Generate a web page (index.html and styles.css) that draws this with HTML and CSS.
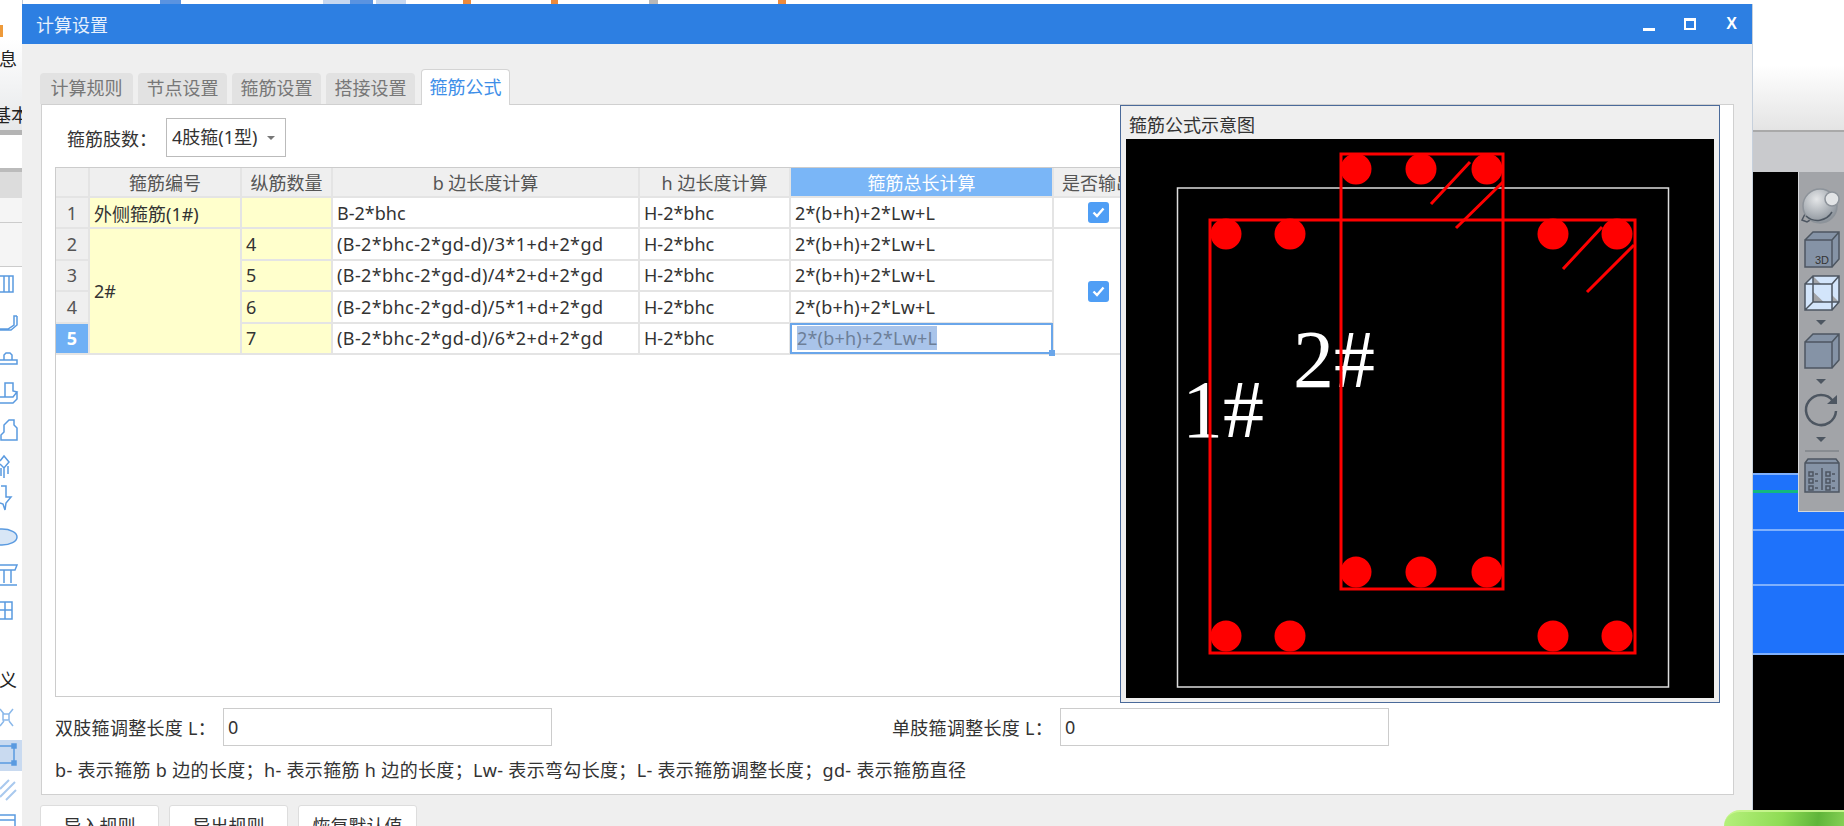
FILE: index.html
```html
<!DOCTYPE html>
<html lang="zh-CN">
<head>
    <meta charset="UTF-8">
    <title>计算设置</title>
    <link rel="stylesheet" href="styles.css">
</head>
<body>

<div class="desktop">
    <!-- Main program behind the dialog -->
    <div class="top-strip">
        <span class="top-chip chip-blue chip-a"></span>
        <span class="top-chip chip-light chip-b"></span>
        <span class="top-chip chip-blue chip-c"></span>
        <span class="top-chip chip-light chip-d"></span>
        <span class="top-chip chip-gray chip-e"></span>
        <span class="top-chip chip-orange chip-f"></span>
        <span class="top-chip chip-orange chip-g"></span>
        <span class="top-chip chip-orange chip-h"></span>
    </div>

    <div class="side-strip">
        <div class="side-ribbon">
            <span class="side-mark"></span>
            <span class="side-word word-info">息</span>
            <span class="side-word word-base">基本</span>
        </div>
        <div class="side-band"></div>
        <div class="side-head"></div>
        <div class="side-row"></div>
        <div class="side-row"></div>
        <span class="side-word word-def">义</span>
        <div class="side-selected"></div>
        <svg class="side-icons" width="22" height="560" viewBox="0 266 22 560" fill="none" stroke="#5a9ae0" stroke-width="1.5">
            <path d="M0 276h13v16H0M4 276v16M9 276v16" />
            <path d="M0 329h8l6-4v-9h3M17 316v9l-6 5H0" />
            <path d="M0 360h17v4H0M4 360v-5l2-2h4l2 2v5" />
            <path d="M0 397h13l4-5-4-1v-8H5v14M0 403h13l4-4v-7" />
            <path d="M4 440h13v-12l-3-3v-5l-5 0-5 5v7l-3 3v5z" />
            <path d="M0 461l4-5 5 6-5 6-4-4M1 468v8M4 468v10M8 466v8" />
            <path d="M1 486h5v11h5l-5 6-1 7-2-6-3-1" />
            <ellipse cx="2" cy="537" rx="15" ry="8" fill="#d8e6f6" />
            <path d="M0 565h17l-2 5H0M4 570v13M11 570v13M0 585h17" />
            <path d="M0 602h12v17H0M0 610h12M5 602v17" />
            <path d="M0 709l4 5M13 709l-4 5M0 726l4-5M13 726l-4-5M3 714h6v6H3z" stroke="#8ab8ea" />
            <path d="M0 746h14v17H0" stroke-width="1.5" />
            <path d="M12 744h4v4h-4zM12 761h4v4h-4z" fill="#5a9ae0" />
            <path d="M0 789l9-9M0 797l15-15M6 800l10-10" stroke="#a9c9ee" stroke-width="2" />
            <path d="M0 815h15v11M0 820h15" />
        </svg>
    </div>

    <div class="right-area">
        <div class="right-ribbon"></div>
        <div class="right-band"></div>
        <div class="view-black">
            <div class="view-toolbar">
                <svg width="46" height="340" viewBox="1798 172 46 340" fill="none" stroke="#4d5661" stroke-width="1.5">
                    <defs>
                        <radialGradient id="sphere-shade" cx="0.4" cy="0.3" r="0.8">
                            <stop offset="0" stop-color="#e4e6e8"/>
                            <stop offset="1" stop-color="#7f8790"/>
                        </radialGradient>
                    </defs>
                    <path d="M1806 212l-4 8 5 2 20-12" />
                    <circle cx="1820" cy="206" r="17" fill="url(#sphere-shade)" stroke="#8d939a" />
                    <path d="M1806 216a17 17 0 0 0 26-4" stroke="#4d5661" />
                    <circle cx="1832" cy="199" r="7" fill="#e2e4e6" stroke="#8d939a" />
                    <path d="M1805 240h27v27h-27zM1805 240l8-8h26v27l-7 8M1832 240l7-8" fill="#8593a6" />
                    <text class="tool-3d" x="1815" y="264">3D</text>
                    <path d="M1805 284h27v26h-27zM1805 284l8-8h26v26l-7 8M1832 284l7-8M1813 276v26h26M1813 302l-8 8" fill="#d3e5fb" />
                    <path d="M1816 320h10l-5 5z" fill="#4d5661" stroke="none" />
                    <path d="M1805 342h27v26h-27zM1805 342l8-8h26v26l-7 8M1832 342l7-8" fill="#8593a6" />
                    <path d="M1816 379h10l-5 5z" fill="#4d5661" stroke="none" />
                    <path d="M1833 401a15 15 0 1 0 3 10" stroke-width="2.5" />
                    <path d="M1827 404h10v-9z" fill="#4d5661" stroke="none" />
                    <path d="M1816 437h10l-5 5z" fill="#4d5661" stroke="none" />
                    <path d="M1805 451h34" stroke="#7f848a" />
                    <path d="M1805 463l3-4h28l3 4v29h-34zM1805 463h34M1822 468v22" fill="#8593a6" />
                    <path d="M1809 472h4v4h-4zM1809 479h4v4h-4zM1809 486h4v4h-4zM1826 472h4v4h-4zM1826 479h4v4h-4zM1826 486h4v4h-4zM1815 474h3M1815 481h3M1815 488h3M1832 474h3M1832 481h3M1832 488h3" />
                </svg>
            </div>
            <div class="view-blue">
                <div class="view-green"></div>
            </div>
        </div>
    </div>

    <!-- Dialog -->
    <div class="dialog">
        <div class="title-bar">
            <span class="title-text">计算设置</span>
            <div class="title-buttons">
                <span class="btn-min"></span>
                <span class="btn-max"></span>
                <span class="btn-close">X</span>
            </div>
        </div>

        <div class="tabs">
            <div class="tab">计算规则</div>
            <div class="tab">节点设置</div>
            <div class="tab">箍筋设置</div>
            <div class="tab">搭接设置</div>
            <div class="tab active">箍筋公式</div>
        </div>

        <div class="tab-pane">
            <div class="limb-row">
                <label class="limb-label">箍筋肢数：</label>
                <div class="combo">4肢箍(1型)<span class="combo-arrow"></span></div>
            </div>

            <div class="grid-frame">
                <table class="formula-grid">
                    <colgroup>
                        <col class="col-head">
                        <col class="col-code">
                        <col class="col-count">
                        <col class="col-b">
                        <col class="col-h">
                        <col class="col-total">
                        <col class="col-output">
                    </colgroup>
                    <tr class="head-row">
                        <th></th>
                        <th>箍筋编号</th>
                        <th>纵筋数量</th>
                        <th>b 边长度计算</th>
                        <th>h 边长度计算</th>
                        <th class="head-selected">箍筋总长计算</th>
                        <th>是否输出</th>
                    </tr>
                    <tr>
                        <th>1</th>
                        <td class="yellow">外侧箍筋(1#)</td>
                        <td class="yellow"></td>
                        <td>B-2*bhc</td>
                        <td>H-2*bhc</td>
                        <td class="total">2*(b+h)+2*Lw+L</td>
                        <td class="check-cell"><span class="check"><svg width="13" height="11" viewBox="0 0 13 11"><path d="M1.5 5.5l3.5 3.5 6.5-7.5" fill="none" stroke="#fff" stroke-width="2.4"/></svg></span></td>
                    </tr>
                    <tr>
                        <th>2</th>
                        <td class="yellow" rowspan="4">2#</td>
                        <td class="yellow">4</td>
                        <td class="long">(B-2*bhc-2*gd-d)/3*1+d+2*gd</td>
                        <td>H-2*bhc</td>
                        <td class="total">2*(b+h)+2*Lw+L</td>
                        <td class="check-cell" rowspan="4"><span class="check"><svg width="13" height="11" viewBox="0 0 13 11"><path d="M1.5 5.5l3.5 3.5 6.5-7.5" fill="none" stroke="#fff" stroke-width="2.4"/></svg></span></td>
                    </tr>
                    <tr>
                        <th>3</th>
                        <td class="yellow">5</td>
                        <td class="long">(B-2*bhc-2*gd-d)/4*2+d+2*gd</td>
                        <td>H-2*bhc</td>
                        <td class="total">2*(b+h)+2*Lw+L</td>
                    </tr>
                    <tr>
                        <th>4</th>
                        <td class="yellow">6</td>
                        <td class="long">(B-2*bhc-2*gd-d)/5*1+d+2*gd</td>
                        <td>H-2*bhc</td>
                        <td class="total">2*(b+h)+2*Lw+L</td>
                    </tr>
                    <tr>
                        <th class="row-selected">5</th>
                        <td class="yellow">7</td>
                        <td class="long">(B-2*bhc-2*gd-d)/6*2+d+2*gd</td>
                        <td>H-2*bhc</td>
                        <td class="total editing"><span class="edit-text">2*(b+h)+2*Lw+L</span><span class="edit-handle"></span></td>
                    </tr>
                </table>
            </div>

            <div class="adjust-row">
                <label class="adjust-label">双肢箍调整长度 L：</label>
                <div class="adjust-input">0</div>
                <label class="adjust-label label-single">单肢箍调整长度 L：</label>
                <div class="adjust-input">0</div>
            </div>

            <div class="note">b- 表示箍筋 b 边的长度；h- 表示箍筋 h 边的长度；Lw- 表示弯勾长度；L- 表示箍筋调整长度；gd- 表示箍筋直径</div>
        </div>

        <div class="button-row">
            <button class="rule-button">导入规则</button>
            <button class="rule-button">导出规则</button>
            <button class="rule-button">恢复默认值</button>
        </div>

        <!-- Diagram floats over the table -->
        <div class="diagram-panel">
            <div class="diagram-title">箍筋公式示意图</div>
            <svg class="diagram" width="588" height="559" viewBox="1126 139 588 559">
                <rect x="1177.5" y="188" width="491" height="499" fill="none" stroke="#ddd" stroke-width="1.5"/>
                <text class="diagram-label" x="1293" y="387">2#</text>
                <text class="diagram-label" x="1182" y="437">1#</text>
                <g fill="none" stroke="#f00" stroke-width="3">
                    <rect x="1341" y="154" width="162" height="435"/>
                    <rect x="1210" y="220" width="425" height="433"/>
                    <path d="M1470 162l-39 42M1503 182l-47 46M1602 227l-39 42M1634 245l-47 47"/>
                </g>
                <g fill="#f00">
                    <circle cx="1356" cy="169" r="15.5"/>
                    <circle cx="1421" cy="169" r="15.5"/>
                    <circle cx="1487" cy="169" r="15.5"/>
                    <circle cx="1356" cy="572" r="15.5"/>
                    <circle cx="1421" cy="572" r="15.5"/>
                    <circle cx="1487" cy="572" r="15.5"/>
                    <circle cx="1226" cy="234" r="15.5"/>
                    <circle cx="1290" cy="234" r="15.5"/>
                    <circle cx="1553" cy="234" r="15.5"/>
                    <circle cx="1617" cy="234" r="15.5"/>
                    <circle cx="1226" cy="636" r="15.5"/>
                    <circle cx="1290" cy="636" r="15.5"/>
                    <circle cx="1553" cy="636" r="15.5"/>
                    <circle cx="1617" cy="636" r="15.5"/>
                </g>
            </svg>
        </div>
    </div>

    <div class="green-badge"></div>
</div>

</body>
</html>
```

FILE: styles.css
```css
html, body {
    margin: 0;
    padding: 0;
    overflow: hidden;
}
body {
    font-family: "Noto Sans", "Noto Sans CJK SC", sans-serif;
    font-size: 18px;
    color: #333;
    background-color: #fff;
}
.desktop {
    position: relative;
    width: 1844px;
    height: 826px;
    overflow: hidden;
}

/* program behind */
.top-strip {
    position: absolute;
    left: 0;
    top: 0;
    width: 1000px;
    height: 4px;
}
.top-chip {
    position: absolute;
    top: 0;
    height: 4px;
}
.chip-blue { background-color: #5a93e0; }
.chip-light { background-color: #c5d7f0; }
.chip-gray { background-color: #b8b8b8; }
.chip-orange { background-color: #ee8a3a; }
.chip-a { left: 160px; width: 21px; }
.chip-b { left: 323px; width: 27px; }
.chip-c { left: 350px; width: 23px; }
.chip-d { left: 376px; width: 30px; }
.chip-e { left: 649px; width: 9px; }
.chip-f { left: 463px; width: 8px; }
.chip-g { left: 551px; width: 7px; }
.chip-h { left: 778px; width: 8px; }

.side-strip {
    position: absolute;
    left: 0;
    top: 0;
    width: 22px;
    height: 826px;
    overflow: hidden;
    background-color: #fff;
    border-right: 1px solid #bcc8d8;
    box-sizing: content-box;
}
.side-ribbon {
    height: 130px;
    background: linear-gradient(#fff 30%, #e6e8ea);
}
.side-mark {
    position: absolute;
    left: 0;
    top: 25px;
    width: 3px;
    height: 12px;
    background-color: #ee9a3a;
}
.side-band {
    height: 38px;
    border-top: 5px solid #b4b4b4;
    box-sizing: border-box;
}
.side-head {
    height: 30px;
    background-color: #dcdcdc;
    border-top: 4px solid #bbb;
    box-sizing: border-box;
}
.side-row {
    height: 24px;
    background-color: #f5f5f5;
    border-bottom: 1px solid #ccc;
}
.side-row + .side-row {
    height: 43px;
}
.side-word {
    position: absolute;
    font-size: 18px;
    line-height: 20px;
    color: #222;
    white-space: nowrap;
}
.word-info { left: -1px; top: 49px; }
.word-base { left: -7px; top: 105px; }
.word-def { left: -1px; top: 670px; }
.side-selected {
    position: absolute;
    left: 0;
    top: 740px;
    width: 22px;
    height: 31px;
    background-color: #c9daf0;
}
.side-icons {
    position: absolute;
    left: 0;
    top: 266px;
}

.right-area {
    position: absolute;
    left: 1753px;
    top: 0;
    width: 91px;
    height: 826px;
}
.right-ribbon {
    height: 130px;
    background: linear-gradient(#fff 50%, #e4e4e4);
}
.right-band {
    height: 42px;
    background-color: #c9cacd;
    border-top: 2px solid #a9a9a9;
    box-sizing: border-box;
}
.view-black {
    position: relative;
    height: 654px;
    background-color: #000;
}
.view-blue {
    position: absolute;
    left: 0;
    top: 301px;
    width: 91px;
    height: 182px;
    background-color: #1e72fb;
    border-top: 2px solid #7fb0fc;
    border-bottom: 2px solid #7fb0fc;
    box-sizing: border-box;
    background-image: linear-gradient(transparent 54px, #7fb0fc 54px, #7fb0fc 56px, transparent 56px, transparent 109px, #7fb0fc 109px, #7fb0fc 111px, transparent 111px);
}
.view-green {
    height: 3px;
    margin-top: 15px;
    background-color: #12b87f;
}
.view-toolbar {
    position: absolute;
    z-index: 1;
    left: 45px;
    top: 0;
    width: 46px;
    height: 340px;
    background-color: #a2a4a8;
    border-left: 1px solid #d6d8da;
    border-bottom: 1px solid #d6d8da;
    box-sizing: border-box;
}
.view-toolbar svg {
    display: block;
    margin-left: -1px;
}
.tool-3d {
    font-family: "Liberation Sans", sans-serif;
    font-size: 11px;
    fill: #333;
    stroke: none;
}

/* dialog */
.dialog {
    position: absolute;
    left: 22px;
    top: 4px;
    width: 1731px;
    height: 880px;
    box-sizing: border-box;
    padding: 0 18px 0 19px;
    background-color: #efefef;
    border-right: 1px solid #c6d0dc;
}
.title-bar {
    display: flex;
    justify-content: space-between;
    align-items: center;
    height: 40px;
    margin: 0 -18px 0 -19px;
    padding: 0 14px;
    background-color: #2d7fe2;
    color: #e6f0fc;
}
.title-buttons {
    display: flex;
    align-items: center;
    gap: 29px;
}
.btn-min {
    width: 12px;
    height: 3px;
    margin-top: 10px;
    background-color: #fff;
}
.btn-max {
    width: 8px;
    height: 7px;
    border: 2px solid #fff;
    border-top-width: 3px;
}
.btn-close {
    width: 13px;
    font-family: "Liberation Sans", sans-serif;
    font-size: 16px;
    font-weight: bold;
    line-height: 20px;
    text-align: center;
    color: #fff;
}
.tabs {
    display: flex;
    align-items: flex-end;
    gap: 5px;
    height: 60px;
    margin-left: -1px;
}
.tab {
    width: 89px;
    height: 31px;
    line-height: 31px;
    text-align: center;
    color: #777;
    background-color: #e2e2e2;
    border-radius: 4px 4px 0 0;
}
.tab:first-child {
    width: 93px;
}
.tab.active {
    position: relative;
    top: 1px;
    height: 36px;
    margin-left: 1px;
    line-height: 34px;
    color: #3d8ee8;
    background-color: #fff;
    border: 1px solid #d4d4d4;
    border-bottom: none;
    box-sizing: border-box;
}
.tab-pane {
    height: 691px;
    box-sizing: border-box;
    padding: 13px 0 0 13px;
    background-color: #fff;
    border: 1px solid #d0d0d0;
}
.limb-row {
    display: flex;
    align-items: center;
    height: 39px;
    margin-left: 12px;
}
.limb-label {
    width: 99px;
}
.combo {
    position: relative;
    box-sizing: border-box;
    width: 120px;
    height: 39px;
    line-height: 36px;
    padding-left: 5px;
    border: 1px solid #bbb;
}
.combo-arrow {
    position: absolute;
    right: 10px;
    top: 17px;
    border-left: 4px solid transparent;
    border-right: 4px solid transparent;
    border-top: 4px solid #777;
}
.grid-frame {
    box-sizing: border-box;
    width: 1650px;
    height: 530px;
    margin-top: 10px;
    border: 1px solid #ccc;
}
.formula-grid {
    border-collapse: collapse;
    table-layout: fixed;
    width: 1087px;
}
.col-head { width: 33px; }
.col-code { width: 152px; }
.col-count { width: 91px; }
.col-b { width: 307px; }
.col-h { width: 151px; }
.col-total { width: 263px; }
.col-output { width: 90px; }
.formula-grid th,
.formula-grid td {
    height: 31.4px;
    padding: 0 0 0 4px;
    border: 2px solid #e4e4e4;
    box-sizing: border-box;
    white-space: nowrap;
    overflow: hidden;
    font-weight: normal;
}
.formula-grid tr:first-child th {
    border-top: none;
}
.formula-grid th:first-child {
    border-left: none;
}
.formula-grid th {
    padding: 0;
    text-align: center;
    color: #555;
    background-color: #efefef;
}
.formula-grid .head-row th {
    height: 29px;
}
.formula-grid .head-selected {
    color: #fff;
    background-color: #7ab6f7;
}
.formula-grid .row-selected {
    color: #fff;
    font-weight: bold;
    background-color: #6fb0f5;
}
.yellow {
    background-color: #ffffcc;
}
.long {
    letter-spacing: 0.4px;
}
.total {
    letter-spacing: 0.2px;
}
.formula-grid .check-cell {
    padding: 0;
}
.check {
    display: flex;
    align-items: center;
    justify-content: center;
    width: 21px;
    height: 21px;
    margin: 0 auto;
    border-radius: 3px;
    background-color: #4f9ef5;
}
.formula-grid .editing {
    position: relative;
    overflow: visible;
    padding-left: 6px;
    outline: 2px solid #6aa6ea;
    outline-offset: -2px;
}
.edit-text {
    color: #6d7f98;
    background-color: #a9c4ea;
}
.edit-handle {
    position: absolute;
    right: -3px;
    bottom: -3px;
    width: 6px;
    height: 6px;
    background-color: #6aa6ea;
}
.adjust-row {
    display: flex;
    align-items: center;
    height: 38px;
    margin-top: 11px;
}
.adjust-label {
    width: 168px;
    letter-spacing: 0.3px;
    white-space: nowrap;
}
.adjust-input {
    box-sizing: border-box;
    width: 329px;
    height: 38px;
    line-height: 36px;
    padding-left: 4px;
    border: 1px solid #ccc;
}
.label-single {
    margin-left: 340px;
}
.note {
    margin-top: 11px;
    line-height: 26px;
    letter-spacing: 0.33px;
    white-space: nowrap;
}
.button-row {
    display: flex;
    gap: 10px;
    margin: 10px 0 0 -1px;
}
.rule-button {
    width: 119px;
    height: 40px;
    padding: 0;
    font-family: inherit;
    font-size: 18px;
    color: #333;
    background-color: #fff;
    border: 1px solid #ddd;
    border-radius: 3px;
}
.diagram-panel {
    position: absolute;
    left: 1098px;
    top: 101px;
    width: 600px;
    height: 598px;
    box-sizing: border-box;
    padding: 0 5px;
    background-color: #efefef;
    border: 1px solid #4a6a9a;
}
.diagram-title {
    height: 33px;
    padding-left: 3px;
    line-height: 38px;
    color: #333;
}
.diagram {
    display: block;
    background-color: #000;
}
.diagram-label {
    font-family: "Liberation Serif", serif;
    font-size: 82px;
    fill: #fff;
}
.green-badge {
    position: absolute;
    left: 1724px;
    top: 810px;
    width: 140px;
    height: 40px;
    border-radius: 16px 16px 0 0;
    border-top: 2px solid #c6f58e;
    box-sizing: border-box;
    background: linear-gradient(100deg, #b6f07c, #8fdc55 40%, #5fb53a 65%, #a6e86c);
}
```
